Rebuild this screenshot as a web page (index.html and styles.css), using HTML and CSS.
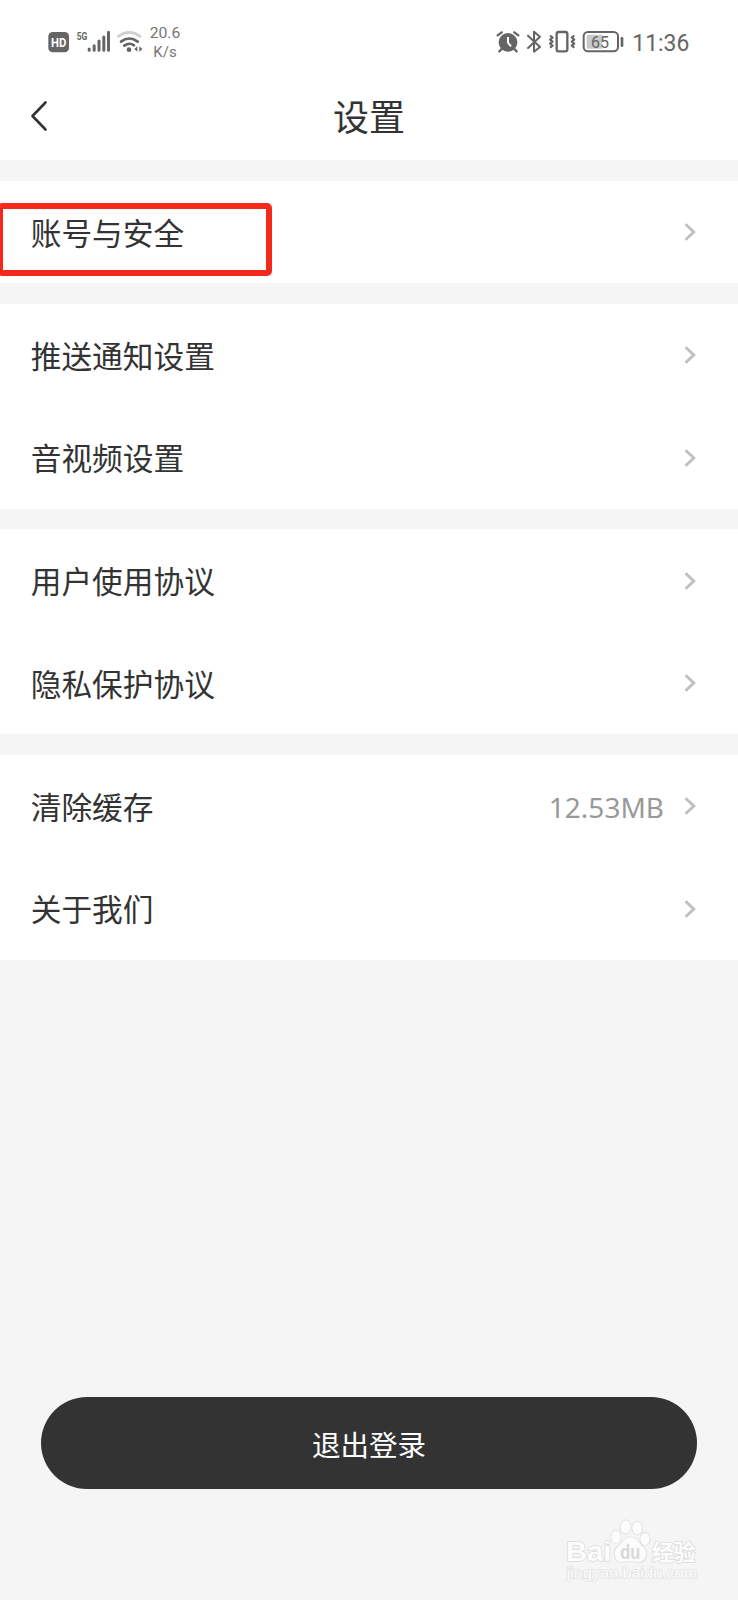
FILE: index.html
```html
<!DOCTYPE html>
<html lang="zh-CN">
<head>
<meta charset="utf-8">
<title>设置</title>
<link rel="stylesheet" href="styles.css">
</head>
<body>
<svg class="defs" width="0" height="0" aria-hidden="true">
  <symbol id="chevron" viewBox="0 0 12 18"><path d="M1.600 1.200 9.800 9 1.600 16.800"/></symbol>
</svg>
<div class="screen">
  <header class="top">
    <div class="status">
      <svg class="status-left" viewBox="0 0 510 165">
        <rect x="55" y="51" width="62" height="61" rx="13" fill="#656565"/>
        <text x="63" y="96" class="hd" textLength="46" lengthAdjust="spacingAndGlyphs">HD</text>
        <text x="140" y="75" class="fiveg" textLength="32" lengthAdjust="spacingAndGlyphs">5G</text>
        <path d="M177.500 102v4M192.500 92v14M207 78v28M221.500 66v40M235.500 52v54" stroke="#656565" stroke-width="9" stroke-linecap="round"/>
        <g fill="none" stroke="#656565" stroke-width="8" stroke-linecap="round">
          <path d="M265 64Q298 40 331 64" stroke="#cfcfcf"/>
          <path d="M273 80Q298 61 323 80"/>
          <path d="M283 92Q298 81 312 91"/>
        </g>
        <circle cx="297" cy="104" r="7" fill="#656565"/>
        <path d="M322 94v16l-9-8zM328 94v16l9-8z" fill="#656565"/>
        <text x="359" y="68" class="speed" textLength="92" lengthAdjust="spacingAndGlyphs">20.6</text>
        <text x="370" y="125" class="speed" textLength="70" lengthAdjust="spacingAndGlyphs">K/s</text>
      </svg>
      <svg class="status-right" viewBox="0 0 660 165">
        <circle cx="84" cy="82" r="28" fill="#656565"/>
        <path d="M84 66v17l9 11" fill="none" stroke="#fff" stroke-width="6"/>
        <path d="M53 61 65 52M103 52l12 9M66 101l-8 8M102 101l8 8" stroke="#656565" stroke-width="7" stroke-linecap="round"/>
        <path d="M144 62 180 96 162 110V50L180 65 144 99" fill="none" stroke="#656565" stroke-width="6" stroke-linejoin="round" stroke-linecap="round"/>
        <rect x="230" y="51" width="32" height="58" rx="6" fill="none" stroke="#656565" stroke-width="7"/>
        <path d="M210 62l8 6-8 6 8 6-8 6 8 6-8 6M283 62l-8 6 8 6-8 6 8 6-8 6 8 6" fill="none" stroke="#656565" stroke-width="6" stroke-linejoin="round"/>
        <rect x="311" y="51" width="103" height="58" rx="13" fill="none" stroke="#656565" stroke-width="6"/>
        <path d="M326 59h40v42h-40q-6 0-6-6V65q0-6 6-6z" fill="#c9c9c9"/>
        <path d="M426 70v22" stroke="#656565" stroke-width="8" stroke-linecap="round"/>
        <text x="333" y="100" class="level" textLength="54" lengthAdjust="spacingAndGlyphs">65</text>
        <text x="457" y="108" class="clock" textLength="171" lengthAdjust="spacingAndGlyphs">11:36</text>
      </svg>
    </div>
    <div class="navbar">
      <svg class="back" viewBox="0 0 18 32"><path d="M15.500 2.500 2.500 16 15.500 29.500"/></svg>
      <h1 class="title">设置</h1>
    </div>
  </header>
  <main>
    <section class="group">
      <div class="row marked"><span class="label">账号与安全</span><svg class="chev"><use href="#chevron"/></svg></div>
    </section>
    <section class="group">
      <div class="row"><span class="label">推送通知设置</span><svg class="chev"><use href="#chevron"/></svg></div>
      <div class="row"><span class="label">音视频设置</span><svg class="chev"><use href="#chevron"/></svg></div>
    </section>
    <section class="group">
      <div class="row"><span class="label">用户使用协议</span><svg class="chev"><use href="#chevron"/></svg></div>
      <div class="row"><span class="label">隐私保护协议</span><svg class="chev"><use href="#chevron"/></svg></div>
    </section>
    <section class="group">
      <div class="row"><span class="label">清除缓存</span><span class="value">12.53MB</span><svg class="chev"><use href="#chevron"/></svg></div>
      <div class="row"><span class="label">关于我们</span><svg class="chev"><use href="#chevron"/></svg></div>
    </section>
  </main>
  <button class="logout">退出登录</button>
  <svg class="watermark" viewBox="0 0 594 300">
    <g class="wm">
      <text x="78" y="184" class="wm-logo" textLength="136" lengthAdjust="spacingAndGlyphs">Bai</text>
      <ellipse cx="228" cy="110" rx="14" ry="19"/>
      <ellipse cx="257" cy="81" rx="15" ry="20"/>
      <ellipse cx="292" cy="84" rx="15" ry="19"/>
      <ellipse cx="315" cy="117" rx="14" ry="19"/>
      <path d="M271 112C253 112 246 130 234 140 218 153 220 184 246 186Q271 182 296 186C322 184 325 155 309 141 297 130 290 112 271 112Z"/>
      <text x="335" y="179" class="wm-cn" textLength="132" lengthAdjust="spacingAndGlyphs">经验</text>
      <text x="80" y="234" class="wm-url" textLength="392" lengthAdjust="spacingAndGlyphs">jingyan.baidu.com</text>
    </g>
    <text x="241" y="176" class="wm-du" textLength="60" lengthAdjust="spacingAndGlyphs">du</text>
  </svg>
</div>
</body>
</html>
```
FILE: styles.css
```css
*, *::after { box-sizing: border-box; }
body {
  margin: 0;
  background: #f5f5f5;
  color: #333;
  font-family: "Noto Sans CJK SC", sans-serif;
}
.defs { position: absolute; }
.screen {
  width: 738px;
  height: 1600px;
  display: flex;
  flex-direction: column;
  overflow: hidden;
}
.top {
  height: 160px;
  background: #fff;
}
.status {
  display: flex;
  justify-content: space-between;
  padding: 15px 38px 0 30px;
}
.status-left { width: 170px; height: 55px; }
.status-right { width: 220px; height: 55px; }
.status text { font-family: Roboto, sans-serif; fill: #656565; }
.status .hd { font-size: 38px; font-weight: 700; fill: #fff; }
.status .fiveg { font-size: 34px; font-weight: 700; }
.status .speed { font-size: 46px; fill: #757575; }
.status .level { font-size: 51px; }
.status .clock { font-size: 71px; }
.navbar {
  display: grid;
  grid-template-columns: 1fr auto 1fr;
  align-items: center;
  height: 91px;
  padding: 0 30px;
}
.back { width: 18px; height: 32px; }
.back path {
  fill: none;
  stroke: #333;
  stroke-width: 2.6;
  stroke-linecap: round;
  stroke-linejoin: round;
}
.title {
  margin: 0 0 2px;
  font-size: 36px;
  line-height: 52px;
  font-weight: 400;
}
.group {
  margin-top: 20.5px;
  background: #fff;
}
.group:first-child { margin-top: 20.9px; }
.row {
  position: relative;
  display: flex;
  align-items: center;
  height: 102.5px;
  padding: 0 42px 0 30.7px;
}
.label {
  flex: 1;
  margin-bottom: 1px;
  font-size: 30.7px;
  line-height: 44px;
}
.value {
  margin: 2px 20px 0 0;
  font-family: "Noto Sans", sans-serif;
  font-size: 28px;
  line-height: 44px;
  color: #999;
}
.chev {
  width: 12px;
  height: 18px;
  fill: none;
  stroke: #bfbfbf;
  stroke-width: 2.9;
}
.marked::after {
  content: "";
  position: absolute;
  left: -3px;
  top: 22px;
  width: 275px;
  height: 73px;
  border: 6px solid #f5281c;
  border-radius: 5px;
}
.logout {
  flex: none;
  width: 656px;
  height: 92px;
  margin: 437px auto 0;
  padding: 1px 0 0;
  border: 0;
  border-radius: 46px;
  background: #333;
  color: #fff;
  font-family: inherit;
  font-size: 28.5px;
}
.watermark {
  flex: none;
  align-self: flex-end;
  width: 198px;
  height: 100px;
  margin-top: 11px;
}
.wm {
  fill: #fcfcfc;
  stroke: #dcdcdc;
  stroke-width: 4.5;
  paint-order: stroke;
  stroke-linejoin: round;
}
.wm-logo { font: 700 84px "Liberation Sans", sans-serif; }
.wm-cn { font: 700 66px "Noto Sans CJK SC", sans-serif; }
.wm-url { font: 400 42px "Liberation Sans", sans-serif; stroke: #e4e4e4; }
.wm-du { font: 700 58px "Liberation Sans", sans-serif; fill: #d8d8d8; }
```
